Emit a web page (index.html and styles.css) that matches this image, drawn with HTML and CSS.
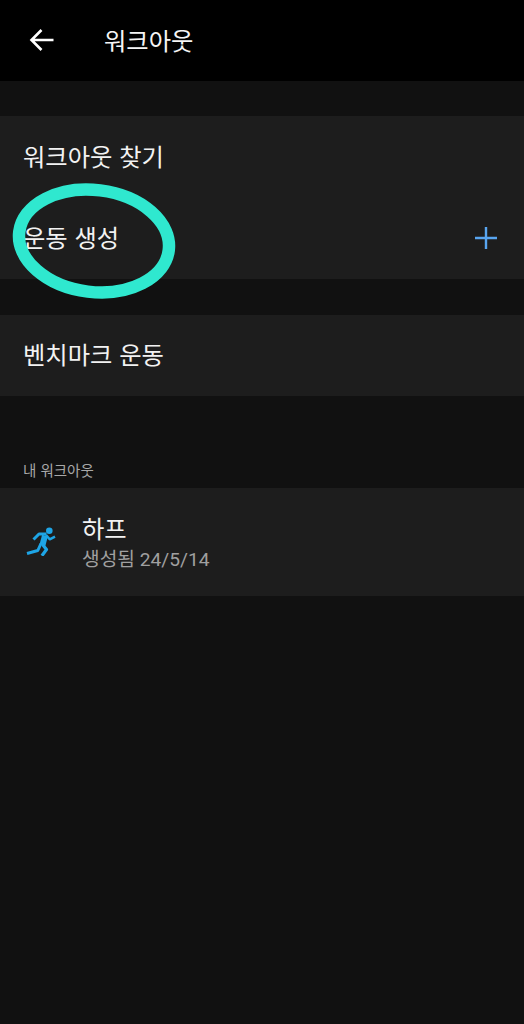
FILE: index.html
```html
<!DOCTYPE html>
<html lang="ko">
<head>
<meta charset="utf-8">
<title>워크아웃</title>
<link rel="stylesheet" href="styles.css">
</head>
<body>
<div class="screen">
  <header class="appbar">
    <svg class="back" viewBox="0 0 26 24" width="26" height="24" aria-hidden="true"><path d="M24.5 12H3M12.5 2 2.500 12l10 10" fill="none" stroke="#fff" stroke-width="2.6"/></svg>
    <h1 class="title">워크아웃</h1>
  </header>
  <section class="card first">
    <div class="row"><span class="row-text">워크아웃 찾기</span></div>
    <div class="row"><span class="row-text">운동 생성</span>
      <svg class="plus" viewBox="0 0 24 24" width="24" height="24" aria-hidden="true"><path d="M12 1v22M1 12h22" stroke="#58a5f0" stroke-width="2.400" fill="none"/></svg>
    </div>
  </section>
  <section class="card second">
    <div class="row single"><span class="row-text">벤치마크 운동</span></div>
  </section>
  <div class="label">내 워크아웃</div>
  <section class="card workout">
    <svg class="runner" viewBox="0 0 30 30" width="30" height="30" aria-hidden="true">
      <circle cx="23.300" cy="4.700" r="3.300" fill="#1ea5e6"/>
      <g fill="none" stroke="#1ea5e6" stroke-linejoin="round" stroke-linecap="butt">
        <path d="M7.500 13.500 13 8h7.500" stroke-width="3"/>
        <path d="M20 9l3.700 4.300 5.300-2.600" stroke-width="2.500"/>
        <path d="M19 9.500 16.500 19" stroke-width="6"/>
        <path d="M15 17.500 11.800 24.500 1 27.500" stroke-width="3"/>
        <path d="M16.500 18.500l4 5-4.600 6.300" stroke-width="3.200"/>
      </g>
    </svg>
    <div class="workout-text">
      <div class="workout-name">하프</div>
      <div class="workout-date">생성됨 24/5/14</div>
    </div>
  </section>
  <svg class="circle" viewBox="0 0 166 118" width="166" height="118" aria-hidden="true">
    <ellipse cx="83" cy="59" rx="75.300" ry="51" transform="rotate(7 83 59)" fill="none" stroke="#2fe8cf" stroke-width="12.500"/>
  </svg>
</div>
</body>
</html>
```
FILE: styles.css
```css
* { box-sizing: border-box; }
html, body { margin: 0; padding: 0; background: #111111; }
body { font-family: "Noto Sans CJK KR", Roboto, sans-serif; color: #fff; }
.screen { position: relative; width: 524px; height: 1024px; overflow: hidden; background: #111111; }
.appbar { height: 81px; background: #000; display: flex; align-items: center; padding: 0 0 1px 29px; }
.back { flex: none; }
.title { margin: 0 0 0 49px; font-size: 24.300px; font-weight: 400; line-height: 1; color: #f5f5f5; }
.card { background: #1d1d1d; }
.first { margin-top: 35px; }
.second { margin-top: 36px; }
.row { height: 81.500px; display: flex; align-items: center; justify-content: space-between; padding: 0 26px 2px 23px; }
.row.single { height: 81px; }
.row-text { font-size: 24.300px; font-weight: 400; line-height: 1; color: #f2f2f2; }
.plus { margin-top: 2px; }
.label { margin: 65px 0 0 23px; height: 18px; font-size: 14.500px; line-height: 18px; color: #a8a8a8; }
.workout { margin-top: 9px; height: 108px; display: flex; align-items: center; padding-left: 26px; }
.runner { flex: none; margin-top: -2px; }
.workout-text { margin-left: 26px; }
.workout-name { font-size: 24.300px; font-weight: 400; line-height: 30px; color: #f2f2f2; }
.workout-date { margin-top: 5px; font-family: Roboto, "Noto Sans CJK KR", sans-serif; font-size: 19.200px; line-height: 24px; color: #a0a0a0; }
.circle { position: absolute; left: 11px; top: 182px; }
```
